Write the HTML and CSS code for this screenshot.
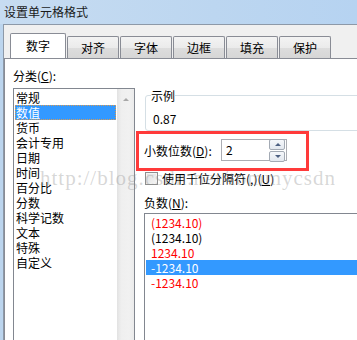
FILE: index.html
```html
<!DOCTYPE html>
<html lang="zh-CN">
  <head>
    <meta charset="UTF-8" />
    <title>设置单元格格式</title>
    <link rel="stylesheet" href="styles.css">
  </head>
  <body>
    <div class="dialog">
      <div class="titlebar">设置单元格格式</div>
      <div class="frame">
        <div class="client">
          <!-- 选项卡 -->
          <ul class="tabs">
            <li class="tab active">数字</li>
            <li class="tab">对齐</li>
            <li class="tab">字体</li>
            <li class="tab">边框</li>
            <li class="tab">填充</li>
            <li class="tab">保护</li>
          </ul>
          <div class="panel">
            <div class="col-left">
              <div class="label">分类(<u>C</u>):</div>
              <div class="listbox category">
                <ul class="items">
                  <li>常规</li>
                  <li class="selected focus">数值</li>
                  <li>货币</li>
                  <li>会计专用</li>
                  <li>日期</li>
                  <li>时间</li>
                  <li>百分比</li>
                  <li>分数</li>
                  <li>科学记数</li>
                  <li>文本</li>
                  <li>特殊</li>
                  <li>自定义</li>
                </ul>
                <div class="scrollbar"><span class="arrow-up"></span></div>
              </div>
            </div>

            <div class="col-right">
              <fieldset class="sample">
                <legend>示例</legend>
                <div class="sample-value">0.87</div>
              </fieldset>

              <div class="decimals">
                <span class="decimals-label">小数位数(<u>D</u>):</span>
                <div class="spin">
                  <span class="spin-value">2</span>
                  <span class="spin-btns">
                    <span class="spin-btn up"></span>
                    <span class="spin-btn down"></span>
                  </span>
                </div>
              </div>

              <div class="check">
                <span class="checkbox"></span>
                <span>使用千位分隔符(,)(<u>U</u>)</span>
              </div>

              <div class="label">负数(<u>N</u>):</div>
              <div class="listbox negative">
                <ul class="items">
                  <li class="red">(1234.10)</li>
                  <li>(1234.10)</li>
                  <li class="red">1234.10</li>
                  <li class="selected">-1234.10</li>
                  <li class="red">-1234.10</li>
                </ul>
              </div>
            </div>

            <!-- 红色标注框 -->
            <div class="mark"></div>
          </div>
        </div>
      </div>
      <div class="watermark">http://blog.csdn.net/tommycsdn</div>
    </div>
  </body>
</html>
```

FILE: styles.css
```css
ul,
ol {
  list-style: none;
  padding: 0;
  margin: 0;
}

body {
  margin: 0;
  background-color: #f0f0f0;
  font-family: "Noto Sans CJK SC", "Microsoft YaHei", sans-serif;
  font-size: 12px;
  color: #000;
}

u {
  text-decoration: underline;
  text-underline-offset: 1px;
}

/* 截图只显示对话框左上部分 */
.dialog {
  position: relative;
  width: 357px;
  height: 340px;
  overflow: hidden;
}

.titlebar {
  height: 24px;
  line-height: 24px;
  padding-left: 4px;
  color: #1a1a1a;
  background: linear-gradient(to right, #c7dcf1, #bcd6f0 60%, #b6d3f1);
}

.frame {
  height: 316px;
  padding-left: 3px;
  background-color: #bcd5ee;
}

.client {
  height: 100%;
  border-top: 1px solid #8d99a8;
  border-left: 1px solid #8d99a8;
  background-color: #f0f0f0;
}

/* 选项卡 */
.tabs {
  display: flex;
  align-items: flex-end;
  gap: 1px;
  height: 33px;
  padding-left: 6px;
}
.tab {
  flex: none;
  width: 52px;
  height: 22px;
  box-sizing: border-box;
  line-height: 21px;
  text-align: center;
  border: 1px solid #898c95;
  border-bottom: none;
  border-radius: 2px 2px 0 0;
  background: linear-gradient(#f3f3f3, #ebebeb 50%, #dddddd 51%, #d6d6d6);
}
.tab.active {
  position: relative;
  width: 56px;
  height: 26px;
  margin-bottom: -1px;
  line-height: 24px;
  background: #fff;
}

.panel {
  position: relative;
  display: flex;
  height: 300px;
  padding: 9px 0 0 8px;
  background-color: #fff;
  border-top: 1px solid #898c95;
  border-left: 1px solid #898c95;
}

.label {
  height: 15px;
  line-height: 15px;
}

/* 列表框 */
.listbox {
  display: flex;
  margin-top: 5px;
  height: 270px;
  border: 1px solid #828790;
  background-color: #fff;
}
.listbox .items {
  flex: 1;
  padding: 1px;
}
.listbox li {
  height: 15px;
  line-height: 15px;
  white-space: nowrap;
}
.listbox li.selected {
  color: #fff;
  background-color: #3399ff;
}
.listbox li.focus {
  outline: 1px dotted #d99a52;
  outline-offset: -1px;
}

.col-left {
  flex: none;
}
.category {
  width: 120px;
}
.category li {
  padding-left: 1px;
}

.scrollbar {
  width: 17px;
  background: linear-gradient(to right, #e2e2e2, #efefef 25%, #f1f1f1 70%, #ebebeb);
}
.arrow-up {
  display: block;
  width: 0;
  height: 0;
  margin: 9px auto 0;
  border-left: 3px solid transparent;
  border-right: 3px solid transparent;
  border-bottom: 3px solid #a8a8a8;
}

.col-right {
  flex: none;
  width: 260px;
  margin-left: 9px;
}

/* 示例 */
.sample {
  margin: 20px 0 0 1px;
  padding: 0 5px 4px;
  border: 1px solid #d5dfe5;
  border-radius: 3px;
}
.sample legend {
  padding: 0;
  line-height: 15px;
}
.sample-value {
  margin-top: 8px;
  padding-left: 2px;
  line-height: 15px;
}

/* 小数位数 */
.decimals {
  display: flex;
  align-items: center;
  height: 22px;
  margin-top: 8px;
}
.decimals-label {
  width: 77px;
}
.spin {
  display: flex;
  align-items: center;
  width: 66px;
  height: 22px;
  box-sizing: border-box;
  border: 1px solid #abadb3;
}
.spin-value {
  flex: 1;
  padding-left: 4px;
  line-height: 20px;
}
.spin-btns {
  display: flex;
  flex-direction: column;
  gap: 1px;
  width: 16px;
  margin-right: 1px;
}
.spin-btn {
  position: relative;
  height: 9px;
  border: 1px solid #a3aab4;
  border-radius: 2px;
  background: linear-gradient(#f6f8fb, #e3e8ef);
}
.spin-btn::after {
  content: "";
  position: absolute;
  left: 5px;
  top: 3px;
  border-left: 3px solid transparent;
  border-right: 3px solid transparent;
}
.spin-btn.up::after {
  border-bottom: 3px solid #4d6082;
}
.spin-btn.down::after {
  border-top: 3px solid #4d6082;
}

/* 千位分隔符 */
.check {
  display: flex;
  align-items: center;
  height: 15px;
  line-height: 15px;
  margin-top: 10px;
}
.checkbox {
  width: 13px;
  height: 13px;
  box-sizing: border-box;
  margin: 0 4px 0 1px;
  border: 1px solid #8e8f8f;
  background: linear-gradient(135deg, #dcdcdc, #f6f6f6);
  box-shadow: inset 0 0 0 1px #f4f4f4;
}

.col-right > .label {
  margin-top: 9px;
}

/* 负数 */
.negative {
  margin-top: 3px;
  height: 140px;
}
.negative li {
  padding-left: 5px;
}
.negative li.red {
  color: #ff0000;
}

/* 红色标注 */
.mark {
  position: absolute;
  left: 131px;
  top: 72px;
  width: 173px;
  height: 40px;
  box-sizing: border-box;
  border: 3px solid #ff3a3a;
}

/* 水印 */
.watermark {
  position: absolute;
  left: 40px;
  top: 166px;
  font-family: "Liberation Serif", serif;
  font-size: 21px;
  letter-spacing: 1px;
  line-height: 24px;
  color: rgba(140, 140, 140, 0.35);
  pointer-events: none;
  white-space: nowrap;
}
```
